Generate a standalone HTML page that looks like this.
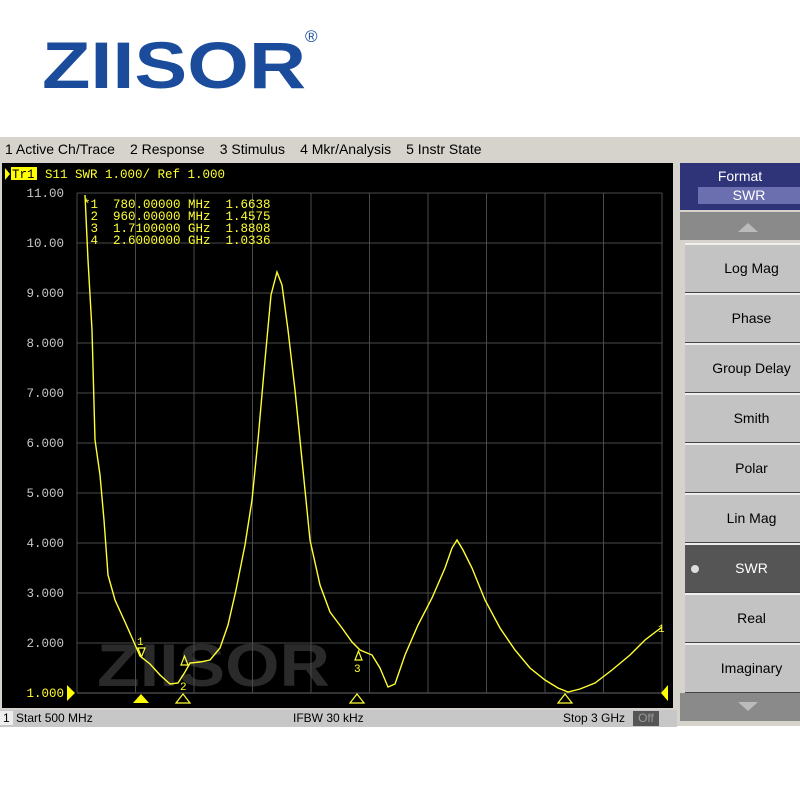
<!DOCTYPE html>
<html><head><style>
body{margin:0;width:800px;height:800px;background:#fff;position:relative;overflow:hidden;font-family:"Liberation Sans",sans-serif}
.logo{position:absolute;left:42px;top:27px;font-size:66px;font-weight:bold;color:#1b4c9c;transform:scaleX(1.2);transform-origin:left top;letter-spacing:0px}
.reg{position:absolute;left:305px;top:27px;font-size:17px;color:#1b4c9c}
.menu{position:absolute;left:0;top:137px;width:800px;height:24px;background:#d6d3cc;font-size:14px;line-height:24px;color:#000}
.menu span{margin-left:5px;margin-right:10px}
.right{position:absolute;left:677px;top:161px;width:123px;height:565px;background:#d6d3cc}
.fmt{position:absolute;left:680px;top:163px;width:120px;height:47px;background:#2f3478;color:#fff;font-size:14px;text-align:center}
.fmt .v{position:absolute;left:18px;top:24px;width:102px;height:17px;background:#6b6fb0;line-height:17px;font-size:14px}
.arr{position:absolute;left:680px;width:120px;height:28px;background:#8a8a8a}
.btn{position:absolute;left:685px;width:115px;height:47px;background:#c3c3c3;border-top:2px solid #eee;border-bottom:1px solid #444;font-size:14px;text-align:center;line-height:47px;color:#000;padding-left:18px;box-sizing:border-box;height:50px}
.sel{background:#555;color:#fff}
.status{position:absolute;left:0;top:710px;width:677px;height:17px;background:#c7c7c7;font-size:12px;line-height:17px}
</style></head><body>
<div class="logo">ZIISOR</div><div class="reg">®</div>
<div class="menu"><span>1 Active Ch/Trace</span><span>2 Response</span><span>3 Stimulus</span><span>4 Mkr/Analysis</span><span>5 Instr State</span></div>
<div class="right"></div>
<svg style="position:absolute;left:0;top:161px" width="677" height="549">
<rect x="0" y="0" width="677" height="549" fill="#d6d3cc"/>
<rect x="2" y="2" width="671" height="545" fill="#000"/>
<g transform="translate(0,-161)">
<text x="97" y="686" font-family="Liberation Sans" font-weight="bold" font-size="60" fill="#2a2a2a" textLength="233" lengthAdjust="spacingAndGlyphs">ZIISOR</text>
<g stroke="#4a4a4a" stroke-width="1">
<line x1="77" y1="193" x2="662" y2="193"/><line x1="77" y1="243" x2="662" y2="243"/><line x1="77" y1="293" x2="662" y2="293"/><line x1="77" y1="343" x2="662" y2="343"/><line x1="77" y1="393" x2="662" y2="393"/><line x1="77" y1="443" x2="662" y2="443"/><line x1="77" y1="493" x2="662" y2="493"/><line x1="77" y1="543" x2="662" y2="543"/><line x1="77" y1="593" x2="662" y2="593"/><line x1="77" y1="643" x2="662" y2="643"/><line x1="77" y1="693" x2="662" y2="693" stroke="#666"/>
<line x1="77" y1="193" x2="77" y2="693"/><line x1="135.5" y1="193" x2="135.5" y2="693"/><line x1="194" y1="193" x2="194" y2="693"/><line x1="252.5" y1="193" x2="252.5" y2="693"/><line x1="311" y1="193" x2="311" y2="693"/><line x1="369.5" y1="193" x2="369.5" y2="693"/><line x1="428" y1="193" x2="428" y2="693"/><line x1="486.5" y1="193" x2="486.5" y2="693"/><line x1="545" y1="193" x2="545" y2="693"/><line x1="603.5" y1="193" x2="603.5" y2="693"/><line x1="662" y1="193" x2="662" y2="693"/>
</g>
<g font-family="Liberation Mono" font-size="12.5" fill="#c8c8c8" text-anchor="end">
<text x="64" y="197">11.00</text><text x="64" y="247">10.00</text><text x="64" y="297">9.000</text><text x="64" y="347">8.000</text><text x="64" y="397">7.000</text><text x="64" y="447">6.000</text><text x="64" y="497">5.000</text><text x="64" y="547">4.000</text><text x="64" y="597">3.000</text><text x="64" y="647">2.000</text><text x="64" y="697" fill="#ffff33">1.000</text>
</g>
<polygon points="5,168 10,174 5,180" fill="#ff0"/>
<rect x="11" y="167" width="26" height="13" fill="#ff0"/>
<g font-family="Liberation Mono" font-size="12.5" fill="#ffff33">
<text x="12" y="178" fill="#000">Tr1</text>
<text x="45" y="178">S11  SWR 1.000/ Ref 1.000</text>
<text x="83" y="208" xml:space="preserve">*1  780.00000 MHz  1.6638</text>
<text x="83" y="220" xml:space="preserve"> 2  960.00000 MHz  1.4575</text>
<text x="83" y="232" xml:space="preserve"> 3  1.7100000 GHz  1.8808</text>
<text x="83" y="244" xml:space="preserve"> 4  2.6000000 GHz  1.0336</text>
<text x="137" y="645" font-size="11">1</text><text x="180" y="690" font-size="11">2</text><text x="354" y="672" font-size="11">3</text><text x="658" y="632" font-size="11">1</text>
</g>
<polyline fill="none" stroke="#ffff33" stroke-width="1.4" points="85,195 88,260 92,330 95,440 100,475 104,520 108,575 115,600 125,622 133,640 140,656 150,664 160,675 170,684 178,683 185,672 190,663 200,662 210,660 220,648 228,625 236,590 245,545 252,500 258,440 265,360 271,295 277,272 282,285 288,330 295,390 302,460 310,540 320,585 330,612 342,628 352,642 360,650 372,655 380,668 388,687 395,684 405,655 418,625 432,598 445,568 452,548 457,540 463,550 472,568 485,600 500,628 515,650 530,668 545,680 558,688 568,692 580,689 595,683 612,670 630,655 645,640 662,627"/>
<g fill="none" stroke="#ffff33" stroke-width="1.2">
<path d="M138,648 h7 l-3.5,9 z"/><path d="M181,665 h7 l-3.5,-9 z"/><path d="M355,660 h7 l-3.5,-9 z"/>
<path d="M176,703 l7,-9 l7,9 z"/><path d="M350,703 l7,-9 l7,9 z"/><path d="M558,703 l7,-9 l7,9 z"/>
</g>
<path d="M133,703 l8,-9 l8,9 z" fill="#ff0"/>
<path d="M67,685 l8,8 l-8,8 z" fill="#ff0"/><path d="M668,685 l-7,8 l7,8 z" fill="#ff0"/>
</g>
</svg>
<div class="status"><span style="background:#eee;padding:0 3px">1</span> Start 500 MHz<span style="position:absolute;left:293px">IFBW 30 kHz</span><span style="position:absolute;left:563px">Stop 3 GHz</span><span style="position:absolute;left:633px;top:1px;width:26px;height:15px;background:#555;color:#999;text-align:center;line-height:15px">Off</span></div>
<div class="fmt"><div style="margin-top:5px">Format</div><div class="v">SWR</div></div>
<div class="arr" style="top:212px"><svg width="120" height="28"><path d="M60,11 L70,20 L50,20 Z" fill="#bbb" transform="translate(8,0)"/></svg></div>
<div class="btn" style="top:243px">Log Mag</div>
<div class="btn" style="top:293px">Phase</div>
<div class="btn" style="top:343px">Group Delay</div>
<div class="btn" style="top:393px">Smith</div>
<div class="btn" style="top:443px">Polar</div>
<div class="btn" style="top:493px">Lin Mag</div>
<div class="btn sel" style="top:543px"><span style="position:absolute;left:6px;top:20px;width:8px;height:8px;border-radius:50%;background:#ddd"></span>SWR</div>
<div class="btn" style="top:593px">Real</div>
<div class="btn" style="top:643px">Imaginary</div>
<div class="arr" style="top:693px"><svg width="120" height="28"><path d="M58,9 L68,18 L78,9 Z" fill="#bbb"/></svg></div>
</body></html>
